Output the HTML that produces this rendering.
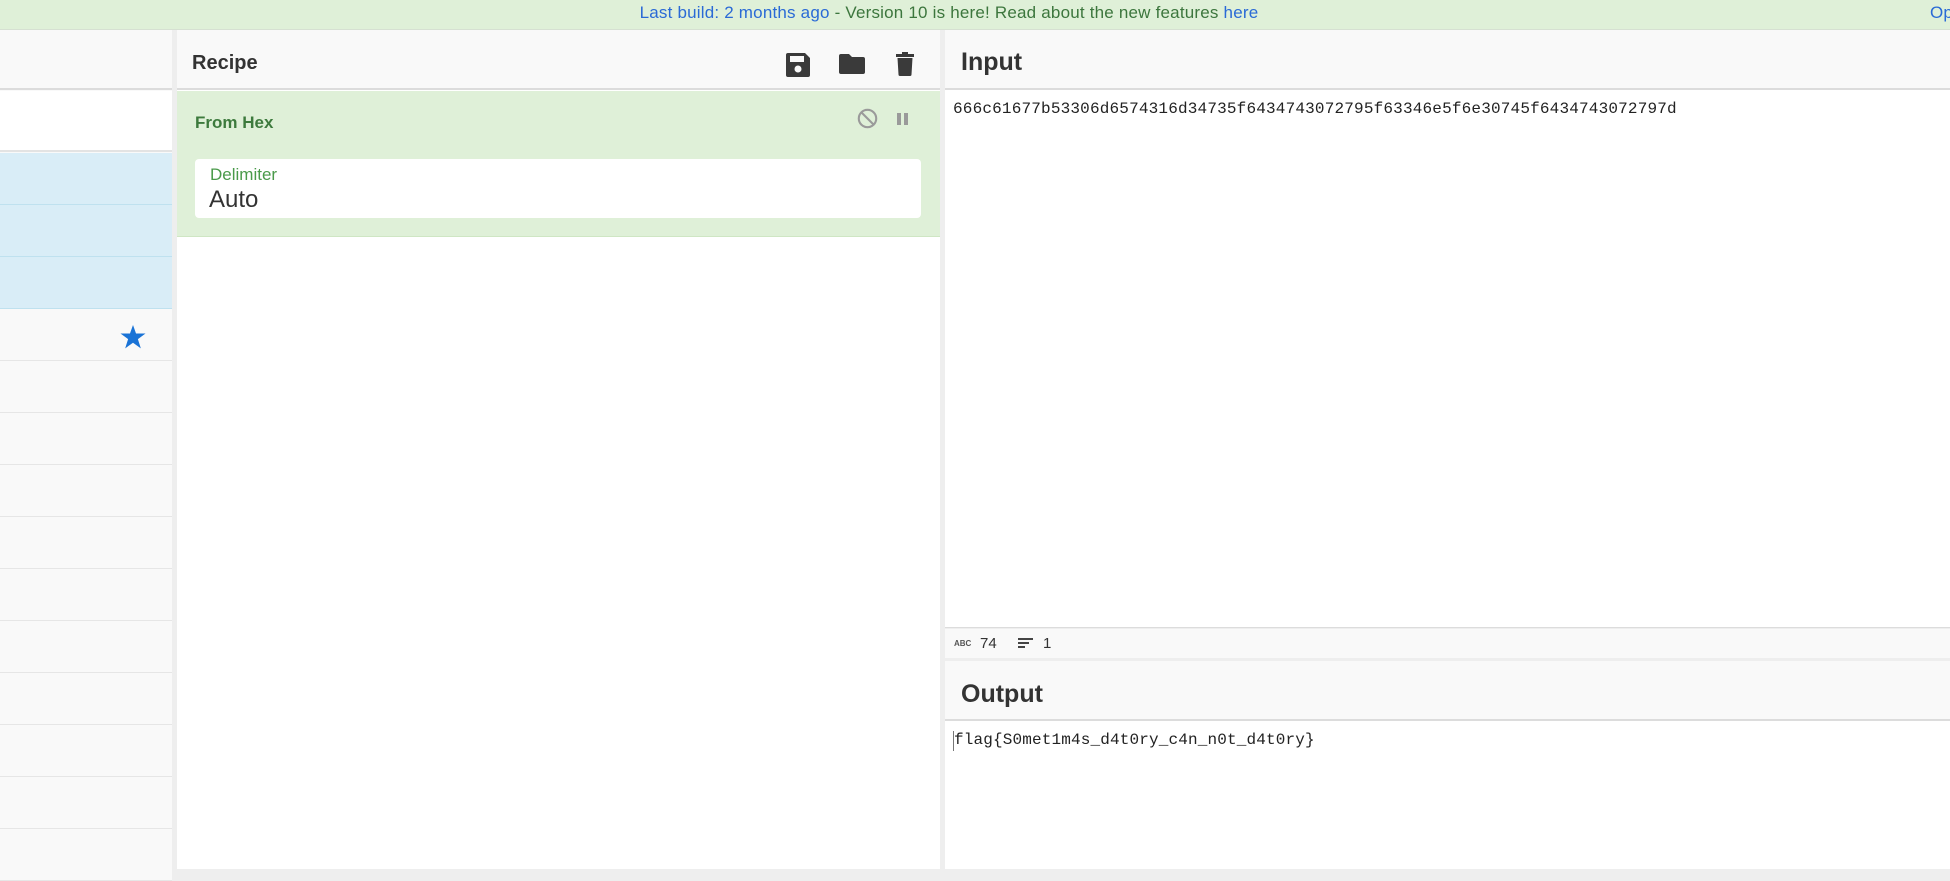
<!DOCTYPE html>
<html><head><meta charset="utf-8"><style>
*{margin:0;padding:0;box-sizing:border-box}
body{width:1950px;height:869px;overflow:hidden;background:#eeeeee;font-family:"Liberation Sans",sans-serif;position:relative}
.abs{position:absolute}
#banner{left:0;top:0;width:1950px;height:30px;background:#dff0d8;border-bottom:1px solid #d6e0d2;color:#3c763d;font-size:17px;letter-spacing:0.2px;line-height:26px;text-align:center;padding-right:52px}
#banner a{color:#2a6ad6;text-decoration:none}
#left{left:0;top:30px;width:172px;height:839px;background:#f9f9f9}
.row{position:absolute;left:0;width:172px;height:52px;border-bottom:1px solid #e6e6e6;background:#f9f9f9}
.row.b{background:#d9edf7;border-bottom:1px solid #bfe1ef}
#recipe{left:177px;top:30px;width:763px;height:839px;background:#fff}
.hdr{position:absolute;left:0;top:0;right:0;height:60px;background:#f9f9f9;border-bottom:2px solid #dcdcdc}
#inp{left:945px;top:30px;width:1005px;height:598px;background:#fff}
#out{left:945px;top:661px;width:1005px;height:208px;background:#fff}
.mono{font-family:"Liberation Mono",monospace;color:#222}
</style></head><body>
<div id="banner" class="abs"><a>Last build: 2 months ago</a> - Version 10 is here! Read about the new features <a>here</a><a class="abs" style="left:1930px;top:0">Op</a></div>

<div id="left" class="abs">
 <div class="hdr" style="background:#f9f9f9"></div>
 <div class="abs" style="left:0;top:61px;width:172px;height:61px;background:#fff;border-bottom:2px solid #e3e3e3"></div>
 <div class="row b" style="top:123px"></div>
 <div class="row b" style="top:175px"></div>
 <div class="row b" style="top:227px"></div>
 <div class="row" style="top:279px"><svg class="abs" style="left:120px;top:16px" width="26" height="24" viewBox="0 0 24 23"><path d="M12 0l2.9 8.2H24l-7.3 5.3 2.8 8.9L12 17l-7.5 5.4 2.8-8.9L0 8.2h9.1z" fill="#1a73d6"/></svg></div>
 <div class="row" style="top:331px"></div><div class="row" style="top:383px"></div><div class="row" style="top:435px"></div>
 <div class="row" style="top:487px"></div><div class="row" style="top:539px"></div><div class="row" style="top:591px"></div>
 <div class="row" style="top:643px"></div><div class="row" style="top:695px"></div><div class="row" style="top:747px"></div><div class="row" style="top:799px"></div>
</div>

<div id="recipe" class="abs">
 <div class="hdr"><div class="abs" style="left:15px;top:22px;font-size:20px;font-weight:bold;color:#333">Recipe</div>
  <svg class="abs" style="left:609px;top:23px" width="24" height="24" viewBox="0 0 24 24"><path d="M2 0h17l5 5v17a2 2 0 0 1-2 2H2a2 2 0 0 1-2-2V2a2 2 0 0 1 2-2z" fill="#3a3a3a"/><rect x="4" y="3" width="14" height="6" fill="#f9f9f9"/><circle cx="12" cy="16" r="3.5" fill="#f9f9f9"/></svg>
  <svg class="abs" style="left:662px;top:24px" width="26" height="20" viewBox="0 0 26 20"><path d="M2 0h8l3 3h11a2 2 0 0 1 2 2v13a2 2 0 0 1-2 2H2a2 2 0 0 1-2-2V2a2 2 0 0 1 2-2z" fill="#3a3a3a"/></svg>
  <svg class="abs" style="left:719px;top:22px" width="18" height="24" viewBox="0 0 18 24"><rect x="0" y="2" width="18" height="3" fill="#3a3a3a"/><rect x="6" y="0" width="6" height="3" fill="#3a3a3a"/><path d="M1.5 6h15l-1 16.5a1.5 1.5 0 0 1-1.5 1.5H4a1.5 1.5 0 0 1-1.5-1.5z" fill="#3a3a3a"/></svg>
 </div>
 <div class="abs" style="left:0;top:61px;width:763px;height:146px;background:#dff0d8;border-bottom:1px solid #cfe6c4">
  <div class="abs" style="left:18px;top:22px;font-size:17px;font-weight:bold;color:#3d7a3d">From Hex</div>
  <svg class="abs" style="left:680px;top:17px" width="21" height="21" viewBox="0 0 20 20"><circle cx="10" cy="10" r="8.3" fill="none" stroke="#9a9a9a" stroke-width="2"/><path d="M4.3 4.3l11.4 11.4" stroke="#9a9a9a" stroke-width="2"/></svg>
  <div class="abs" style="left:720px;top:22px;width:4px;height:12px;background:#9a9a9a"></div>
  <div class="abs" style="left:727px;top:22px;width:4px;height:12px;background:#9a9a9a"></div>
  <div class="abs" style="left:18px;top:68px;width:726px;height:59px;background:#fff;border-radius:4px">
   <div class="abs" style="left:15px;top:6px;font-size:17px;color:#4a9a4a">Delimiter</div>
   <div class="abs" style="left:14px;top:27px;font-size:24px;color:#333">Auto</div>
  </div>
 </div>
</div>

<div id="inp" class="abs">
 <div class="hdr"><div class="abs" style="left:16px;top:18px;font-size:25px;font-weight:bold;color:#333">Input</div></div>
 <div class="abs mono" style="left:8px;top:70px;font-size:16px;letter-spacing:0.18px">666c61677b53306d6574316d34735f6434743072795f63346e5f6e30745f6434743072797d</div>
 <div class="abs" style="left:0;top:597px;width:1005px;height:1px;background:#dcdcdc"></div>
</div>
<div class="abs" style="left:945px;top:629px;width:1005px;height:29px;background:#f9f9f9;font-size:15px;color:#333">
 <div class="abs" style="left:9px;top:10px;font-size:8px;font-weight:bold;color:#555">ABC</div>
 <div class="abs" style="left:35px;top:6px">74</div>
 <div class="abs" style="left:73px;top:9px;width:15px;height:2px;background:#444"></div>
 <div class="abs" style="left:73px;top:13px;width:11px;height:2px;background:#444"></div>
 <div class="abs" style="left:73px;top:17px;width:7px;height:2px;background:#444"></div>
 <div class="abs" style="left:98px;top:6px">1</div>
</div>
<div id="out" class="abs">
 <div class="hdr"><div class="abs" style="left:16px;top:19px;font-size:25px;font-weight:bold;color:#333">Output</div></div>
 <div class="abs" style="left:8px;top:70px;width:1px;height:20px;background:#777"></div>
 <div class="abs mono" style="left:9px;top:70px;font-size:16px;letter-spacing:0.15px">flag{S0met1m4s_d4t0ry_c4n_n0t_d4t0ry}</div>
</div>
</body></html>
